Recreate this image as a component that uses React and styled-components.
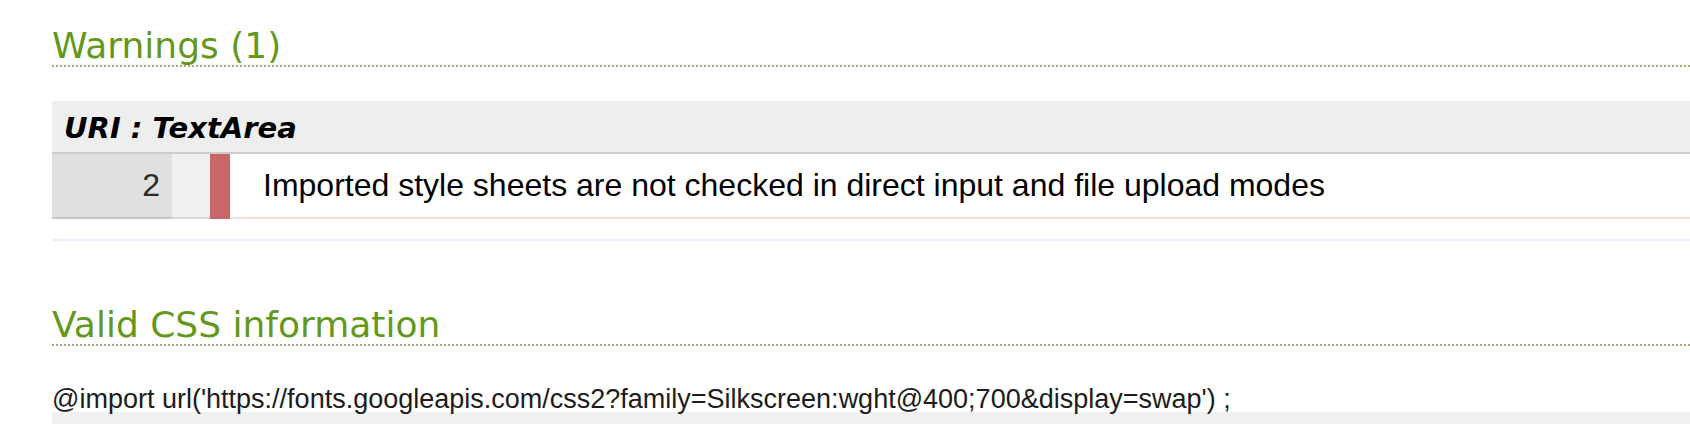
import React from "react";
import styled, { createGlobalStyle } from "styled-components";

const GlobalStyle = createGlobalStyle`
  html, body {
    margin: 0;
    padding: 0;
    background: #fff;
    overflow: hidden;
  }
`;

const Page = styled.div`
  padding-left: 52px;
  width: 1638px;
  font-family: "Liberation Sans", Arial, sans-serif;
  color: #000;
`;

const SectionTitle = styled.h2`
  margin: ${(p) => p.$top}px 0 0;
  padding-top: 2px;
  font-family: "DejaVu Sans", Verdana, sans-serif;
  font-weight: normal;
  font-size: 36px;
  line-height: 38px;
  color: #64981c;
  border-bottom: 2px dotted #a8a67a;
`;

const Report = styled.div`
  margin-top: 34px;
  border-bottom: 2px solid #eceffd;
  padding-bottom: 20px;
`;

const UriHeader = styled.div`
  background: #eeeeee;
  border-bottom: 2px solid #cccccc;
  padding: 11px 12px 8px;
  font-family: "DejaVu Sans", Verdana, sans-serif;
  font-weight: bold;
  font-style: italic;
  font-size: 29px;
  line-height: 32px;
`;

const MessageRow = styled.div`
  display: grid;
  grid-template-columns: 120px 38px 20px 1fr;
  height: 65px;
`;

const LineCell = styled.div`
  display: flex;
  align-items: center;
  justify-content: flex-end;
  padding-right: 12px;
  background: #e0e0e0;
  border-bottom: 2px solid #c8c8c8;
  font-size: 32px;
  color: #2a2a2a;
`;

const LevelCell = styled.div`
  background: #f0f0f0;
  border-bottom: 2px solid #d8d8d8;
`;

const Marker = styled.div`
  background: #c96667;
`;

const MessageCell = styled.div`
  display: flex;
  align-items: center;
  padding-left: 33px;
  border-bottom: 2px solid #fbdede;
  font-size: 32px;
  white-space: nowrap;
`;

const Rule = styled.p`
  margin: 41px 0 0;
  font-size: 27px;
  line-height: 25px;
  color: #1c1c1c;
  white-space: nowrap;
`;

const RuleBody = styled.div`
  height: 40px;
  background: #f0f0f0;
`;

export default function App() {
  return (
    <>
      <GlobalStyle />
      <Page>
        <SectionTitle $top={25}>Warnings (1)</SectionTitle>
        <Report>
          <UriHeader>URI : TextArea</UriHeader>
          <MessageRow>
            <LineCell>2</LineCell>
            <LevelCell />
            <Marker />
            <MessageCell>
              Imported style sheets are not checked in direct input and file upload modes
            </MessageCell>
          </MessageRow>
        </Report>
        <SectionTitle $top={63}>Valid CSS information</SectionTitle>
        <Rule>
          @import url('https://fonts.googleapis.com/css2?family=Silkscreen:wght@400;700&amp;display=swap') ;
        </Rule>
        <RuleBody />
      </Page>
    </>
  );
}
